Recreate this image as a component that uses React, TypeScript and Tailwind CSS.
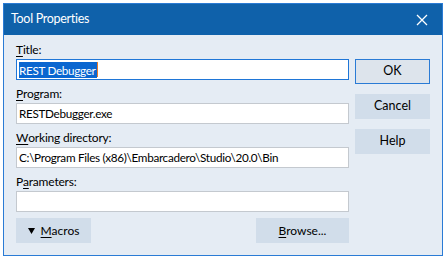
export default function App() {
    const font = { fontFamily: 'Lato, "Noto Sans", sans-serif' }

    const Field = ({ label, u, rest, value, focused, selected }: { label: string; u: string; rest: string; value: string; focused?: boolean; selected?: boolean }) => (
        <div className="flex flex-col">
            <div className="h-[18px] flex items-center text-[12px] tracking-[-0.2px] text-black">
                {label}<span className="underline underline-offset-2">{u}</span>{rest}
            </div>
            <div className={`h-[21px] flex items-center px-[2px] bg-white border ${focused ? 'border-[#1f76d7]' : 'border-[#c4c9cf]'} text-[11.7px] tracking-[-0.3px] text-black whitespace-nowrap`}>
                {selected ? (
                    <span className="flex items-center">
                        <span className="bg-[#0a66d0] text-white leading-[16px] pr-[1px]">{value}</span>
                        <span className="w-[1px] h-[15px] bg-[#e87a2a]" />
                    </span>
                ) : (
                    <span>{value}</span>
                )}
            </div>
        </div>
    )

    return (
        <div className="w-[446px] h-[258px] bg-white pl-[3px] pt-[3px]" style={font}>
            <div className="w-[440px] h-[253px] border border-[#2a7bd5] flex flex-col bg-[#e5ecf4]">
                <div className="h-[31px] bg-[#0f61aa] flex items-center justify-between pl-[7px] pr-[14px] text-white">
                    <span className="text-[12.5px] tracking-[-0.3px]">Tool Properties</span>
                    <svg width="12" height="12" viewBox="0 0 12 12">
                        <path d="M1 1 L11 11 M11 1 L1 11" stroke="white" strokeWidth="1.3" fill="none" />
                    </svg>
                </div>
                <div className="flex pl-[12px] pt-[6px] gap-[6px]">
                    <div className="w-[333px] flex flex-col gap-[5px]">
                        <Field label="" u="T" rest="itle:" value="REST Debugger" focused selected />
                        <Field label="" u="P" rest="rogram:" value="RESTDebugger.exe" />
                        <Field label="" u="W" rest="orking directory:" value="C:\Program Files (x86)\Embarcadero\Studio\20.0\Bin" />
                        <Field label="P" u="a" rest="rameters:" value="" />
                        <div className="flex justify-between mt-[1px]">
                            <button className="w-[75px] h-[25px] bg-[#d1ddea] flex items-center justify-center gap-[6px] text-[12px] text-black">
                                <svg width="7" height="6" viewBox="0 0 7 6"><path d="M0 0 H7 L3.5 6 Z" fill="black" /></svg>
                                <span><span className="underline underline-offset-2">M</span>acros</span>
                            </button>
                            <button className="w-[93px] h-[25px] bg-[#d1ddea] flex items-center justify-center text-[12px] text-black">
                                <span><span className="underline underline-offset-2">B</span>rowse...</span>
                            </button>
                        </div>
                    </div>
                    <div className="flex flex-col pt-[18px] gap-[10px]">
                        <button className="w-[75px] h-[25px] bg-[#dde4ec] border border-[#2a7bd5] flex items-center justify-center text-[12.5px] text-black">OK</button>
                        <button className="w-[75px] h-[25px] bg-[#d1ddea] flex items-center justify-center text-[12.5px] text-black">Cancel</button>
                        <button className="w-[75px] h-[25px] bg-[#d1ddea] flex items-center justify-center text-[12.5px] text-black">Help</button>
                    </div>
                </div>
            </div>
        </div>
    )
}
